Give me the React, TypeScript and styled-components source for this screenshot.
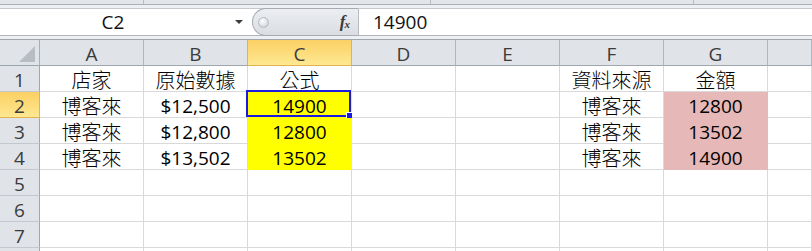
import React from 'react';
import styled, { createGlobalStyle, css } from 'styled-components';

const GlobalStyle = createGlobalStyle`
  html, body {
    margin: 0;
    padding: 0;
    background: #ffffff;
    overflow: hidden;
  }
  body {
    width: 812px;
    height: 251px;
    font-family: 'Open Sans', 'Noto Sans CJK TC', sans-serif;
  }
`;

const Page = styled.div`
  display: flex;
  flex-direction: column;
  width: 812px;
  height: 251px;
  overflow: hidden;

  & > * {
    flex-shrink: 0;
  }
`;

const TopStrip = styled.div`
  display: flex;
  height: 4px;
  background: #e2e5ea;
  border-bottom: 1px solid #a9afb7;
`;

const StripPart = styled.div<{ $w: number }>`
  width: ${(p) => p.$w}px;
  border-right: 1px solid #b9bec5;
`;

const FormulaArea = styled.div`
  background: #eef0f3;
  padding: 3px 0 3px;
`;

const FormulaBar = styled.div`
  display: flex;
  height: 26px;
  background: #ffffff;
  border-top: 1px solid #c5c9ce;
  border-bottom: 1px solid #b1b5bb;
`;

const NameBox = styled.div`
  display: flex;
  align-items: center;
  width: 252px;
  font-size: 19px;
  color: #111;
`;

const NameText = styled.div`
  width: 226px;
  text-align: center;
  line-height: 26px;
`;

const DropArrow = styled.div`
  width: 0;
  height: 0;
  margin-left: 9px;
  border-left: 4px solid transparent;
  border-right: 4px solid transparent;
  border-top: 4px solid #3c3c3c;
`;

const FxPill = styled.div`
  display: flex;
  align-items: center;
  justify-content: space-between;
  box-sizing: border-box;
  width: 106px;
  height: 28px;
  margin-top: -1px;
  padding: 0 7px 0 5px;
  background: linear-gradient(#eceef1, #dadde2);
  border: 1px solid #a7acb3;
  border-right: none;
  border-radius: 14px 0 0 14px;
`;

const Knob = styled.div`
  width: 9px;
  height: 9px;
  border-radius: 50%;
  background: radial-gradient(circle at 40% 35%, #ffffff, #c5c9cf);
  border: 1px solid #b5bac1;
`;

const FxLabel = styled.span`
  font-family: 'Liberation Serif', serif;
  font-style: italic;
  font-weight: bold;
  font-size: 17px;
  color: #3a3a3a;
  letter-spacing: -1px;
  margin-right: 2px;

  sub {
    font-size: 11px;
    vertical-align: -1px;
  }
`;

const FormulaInput = styled.div`
  flex: 1;
  border-left: 1px solid #b7bcc3;
  padding-left: 14px;
  font-size: 19px;
  line-height: 26px;
  color: #111;
`;

const Sheet = styled.div`
  display: grid;
  grid-template-columns: 40px repeat(7, 104px) 44px;
  grid-auto-rows: 26px;
  border-top: 1px solid #9ea6ae;
`;

const headerBase = css`
  box-sizing: border-box;
  display: flex;
  align-items: center;
  justify-content: center;
  padding-top: 3px;
  font-size: 19px;
  line-height: 22px;
  color: #3b3b3b;
`;

const selectedHeader = css`
  background: linear-gradient(#fbd064, #fee891);
  border-color: #e2b24c;
`;

const Corner = styled.div`
  position: relative;
  box-sizing: border-box;
  background: #e0e3e8;
  border-right: 1px solid #a7aeb6;
  border-bottom: 1px solid #9ea6ae;

  &::after {
    content: '';
    position: absolute;
    right: 4px;
    bottom: 3px;
    width: 0;
    height: 0;
    border-left: 16px solid transparent;
    border-bottom: 16px solid #b8bdc3;
  }
`;

const ColHeader = styled.div<{ $selected?: boolean }>`
  ${headerBase};
  background: #e0e3e8;
  border-right: 1px solid #b0b6bd;
  border-bottom: 1px solid #9ea6ae;
  ${(p) => p.$selected && selectedHeader};
`;

const RowHeader = styled.div<{ $selected?: boolean }>`
  ${headerBase};
  background: #e0e3e8;
  border-right: 1px solid #9ea6ae;
  border-bottom: 1px solid #c3c8ce;
  ${(p) => p.$selected && selectedHeader};
`;

const Cell = styled.div<{ $fill?: string; $cjk?: boolean }>`
  position: relative;
  box-sizing: border-box;
  display: flex;
  align-items: center;
  justify-content: center;
  padding-top: 2px;
  line-height: 22px;
  font-size: ${(p) => (p.$cjk ? '20px' : '19px')};
  font-weight: ${(p) => (p.$cjk ? 300 : 400)};
  font-family: ${(p) =>
    p.$cjk ? "'Noto Sans CJK TC', sans-serif" : "'Open Sans', 'Noto Sans CJK TC', sans-serif"};
  color: #000;
  white-space: nowrap;
  background: ${(p) => p.$fill || '#ffffff'};
  border-right: 1px solid ${(p) => p.$fill || '#d9d9d9'};
  border-bottom: 1px solid ${(p) => p.$fill || '#d9d9d9'};
`;

const Selection = styled.div`
  position: absolute;
  left: -2px;
  top: -2px;
  width: 105px;
  height: 27px;
  box-sizing: border-box;
  border: 2px solid #1a1ae0;
  pointer-events: none;
`;

const FillHandle = styled.div`
  position: absolute;
  right: -4px;
  bottom: -4px;
  width: 5px;
  height: 5px;
  background: #1a1ae0;
  border: 1px solid #ffffff;
`;

const YELLOW = '#ffff00';
const PINK = '#e6b8b7';

const columns = ['A', 'B', 'C', 'D', 'E', 'F', 'G', ''];

const rows: string[][] = [
  ['店家', '原始數據', '公式', '', '', '資料來源', '金額', ''],
  ['博客來', '$12,500', '14900', '', '', '博客來', '12800', ''],
  ['博客來', '$12,800', '12800', '', '', '博客來', '13502', ''],
  ['博客來', '$13,502', '13502', '', '', '博客來', '14900', ''],
  ['', '', '', '', '', '', '', ''],
  ['', '', '', '', '', '', '', ''],
  ['', '', '', '', '', '', '', ''],
  ['', '', '', '', '', '', '', ''],
];

const fillFor = (r: number, c: number) => {
  if (r >= 1 && r <= 3 && c === 2) return YELLOW;
  if (r >= 1 && r <= 3 && c === 6) return PINK;
  return undefined;
};

const isCjk = (s: string) => /[\u3400-\u9fff]/.test(s);

const App = () => {
  return (
    <Page>
      <GlobalStyle />
      <TopStrip>
        <StripPart $w={143} />
        <StripPart $w={286} />
        <StripPart $w={262} />
      </TopStrip>
      <FormulaArea>
        <FormulaBar>
          <NameBox>
            <NameText>C2</NameText>
            <DropArrow />
          </NameBox>
          <FxPill>
            <Knob />
            <FxLabel>
              f<sub>x</sub>
            </FxLabel>
          </FxPill>
          <FormulaInput>14900</FormulaInput>
        </FormulaBar>
      </FormulaArea>
      <Sheet>
        <Corner />
        {columns.map((col, i) => (
          <ColHeader key={i} $selected={col === 'C'}>
            {col}
          </ColHeader>
        ))}
        {rows.map((row, r) => (
          <React.Fragment key={r}>
            <RowHeader $selected={r === 1}>{r < 7 ? r + 1 : ''}</RowHeader>
            {row.map((value, c) => (
              <Cell key={c} $fill={fillFor(r, c)} $cjk={isCjk(value)}>
                {value}
                {r === 1 && c === 2 && (
                  <Selection>
                    <FillHandle />
                  </Selection>
                )}
              </Cell>
            ))}
          </React.Fragment>
        ))}
      </Sheet>
    </Page>
  );
};

export default App;
